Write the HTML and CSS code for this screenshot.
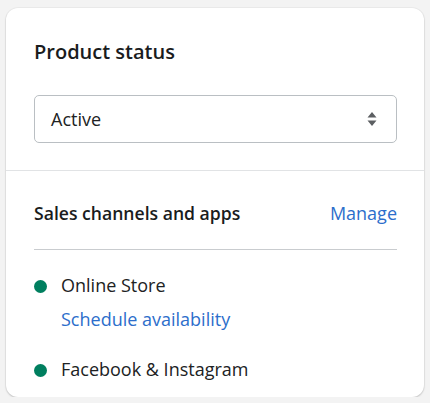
FILE: index.html
```html
<!DOCTYPE html>
<html>
<head>
<meta charset="utf-8">
<link rel="stylesheet" href="styles.css">
</head>
<body>
<div class="card">
  <div class="section top">
    <h2 class="title">Product status</h2>
    <div class="select">
      <span class="select-value">Active</span>
      <svg class="select-arrows" width="10" height="16" viewBox="0 0 10 16"><path d="M5 1 L9.5 6.5 H0.5 Z M5 15 L0.5 9.5 H9.5 Z" fill="#5c5f62"/></svg>
    </div>
  </div>
  <div class="section bottom">
    <div class="row-head">
      <h3 class="subtitle">Sales channels and apps</h3>
      <a class="link">Manage</a>
    </div>
    <ul class="channels">
      <li class="channel">
        <span class="dot"></span>
        <div class="channel-body">
          <span class="channel-name">Online Store</span>
          <a class="link">Schedule availability</a>
        </div>
      </li>
      <li class="channel">
        <span class="dot"></span>
        <div class="channel-body">
          <span class="channel-name">Facebook &amp; Instagram</span>
        </div>
      </li>
    </ul>
  </div>
</div>
</body>
</html>
```
FILE: styles.css
```css
html, body {
  margin: 0;
  padding: 0;
}
body {
  background: #f3f3f3;
  font-family: "Open Sans", "Noto Sans", sans-serif;
  color: #202223;
  padding: 8px 6px 0 6px;
}
.card {
  width: 418px;
  background: #fff;
  border-radius: 12px;
  box-shadow: 0 0 0 1px rgba(0,0,0,0.03), 0 1px 2px rgba(0,0,0,0.18);
}
.section {
  padding: 0 27px 0 28px;
}
.top {
  padding-top: 30px;
  padding-bottom: 27px;
  border-bottom: 1px solid #e1e3e5;
}
.title {
  margin: 0;
  font-size: 20px;
  font-weight: 600;
  line-height: 28px;
  color: #1a1c1d;
}
.select {
  margin-top: 29px;
  height: 46px;
  border: 1px solid #babfc3;
  border-radius: 5px;
  display: flex;
  align-items: center;
  justify-content: space-between;
  padding: 0 19px 0 16px;
}
.select-value {
  font-size: 18px;
}
.select-arrows {
  display: block;
}
.bottom {
  padding-top: 30px;
  padding-bottom: 16px;
}
.row-head {
  display: flex;
  justify-content: space-between;
  align-items: baseline;
  padding-bottom: 24px;
  border-bottom: 1px solid #c9cccf;
}
.subtitle {
  margin: 0;
  font-size: 17.6px;
  font-weight: 600;
  line-height: 24px;
  color: #1a1c1d;
}
.link {
  color: #2c6ecb;
  font-size: 18px;
  line-height: 24px;
}
.channels {
  list-style: none;
  margin: 0;
  padding: 23px 0 0 0;
  display: flex;
  flex-direction: column;
  gap: 26px;
}
.channel {
  display: flex;
  align-items: flex-start;
}
.dot {
  width: 13px;
  height: 13px;
  border-radius: 50%;
  background: #007f5f;
  margin: 7px 14px 0 0;
  flex: none;
}
.channel-body {
  display: flex;
  flex-direction: column;
  gap: 10px;
}
.channel-name {
  font-size: 18px;
  line-height: 24px;
}
```
